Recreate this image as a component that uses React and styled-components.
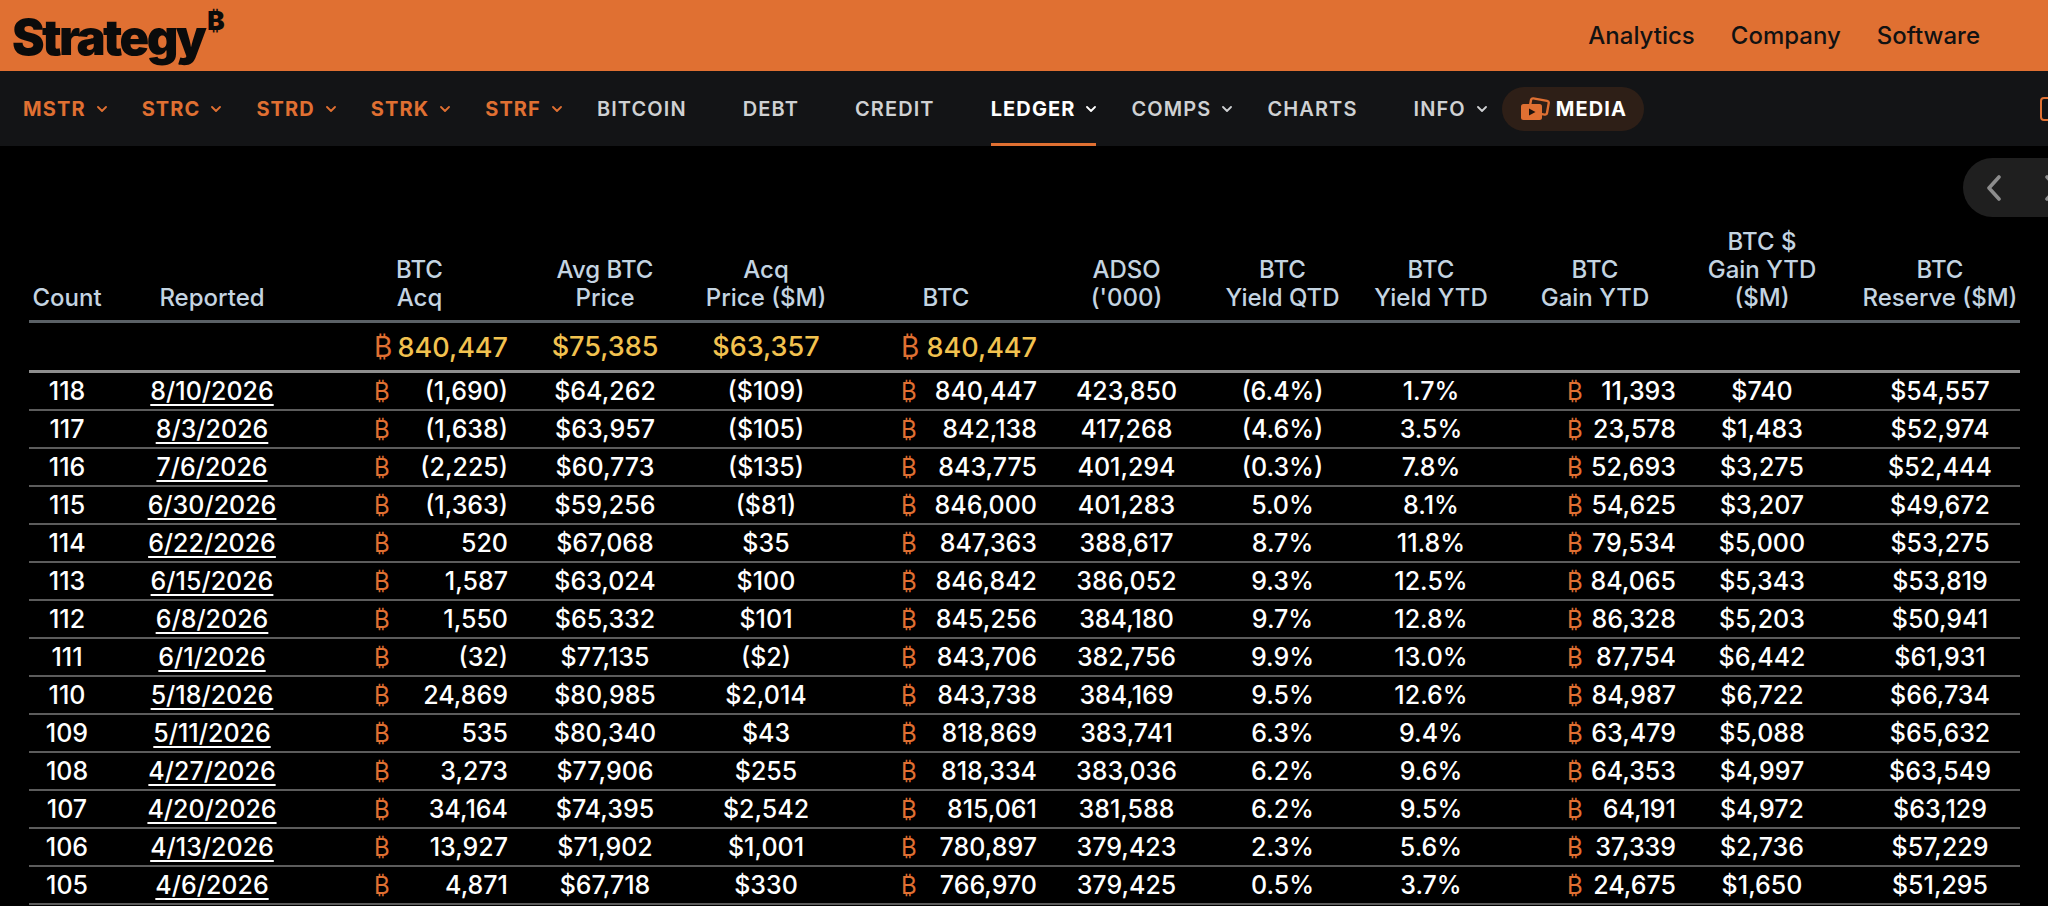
import React from "react";
import styled, { createGlobalStyle, css } from "styled-components";

const ORANGE = "#e07032";
const YELLOW = "#f2c24f";

const GlobalStyle = createGlobalStyle`
  html, body {
    margin: 0;
    padding: 0;
    background: #000;
    overflow: hidden;
  }
  body {
    font-family: Inter, "Noto Sans", "Liberation Sans", sans-serif;
    color: #fff;
  }
`;

const navItems = [
  { label: "MSTR", tone: "orange", menu: true },
  { label: "STRC", tone: "orange", menu: true },
  { label: "STRD", tone: "orange", menu: true },
  { label: "STRK", tone: "orange", menu: true },
  { label: "STRF", tone: "orange", menu: true },
  { label: "BITCOIN", tone: "plain" },
  { label: "DEBT", tone: "plain" },
  { label: "CREDIT", tone: "plain" },
  { label: "LEDGER", tone: "active", menu: true },
  { label: "COMPS", tone: "plain", menu: true },
  { label: "CHARTS", tone: "plain" },
  { label: "INFO", tone: "plain", menu: true },
];

// width / padding of each column, measured off the screenshot
const columns = [
  { head: ["Count"], w: 76 },
  { head: ["Reported"], w: 214 },
  { head: ["BTC", "Acq"], w: 201, btc: true, pl: 55, pr: 12 },
  { head: ["Avg BTC", "Price"], w: 170 },
  { head: ["Acq", "Price ($M)"], w: 152 },
  { head: ["BTC"], w: 208, btc: true, pl: 59, pr: 13 },
  { head: ["ADSO", "('000)"], w: 153 },
  { head: ["BTC", "Yield QTD"], w: 159 },
  { head: ["BTC", "Yield YTD"], w: 138 },
  { head: ["BTC", "Gain YTD"], w: 190, btc: true, pl: 67, pr: 14 },
  { head: ["BTC $", "Gain YTD", "($M)"], w: 144 },
  { head: ["BTC", "Reserve ($M)"], w: 186, pl: 26, headPl: 26 },
];

const totals = ["", "", "840,447", "$75,385", "$63,357", "840,447", "", "", "", "", "", ""];

const rows = [
  ["118", "8/10/2026", "(1,690)", "$64,262", "($109)", "840,447", "423,850", "(6.4%)", "1.7%", "11,393", "$740", "$54,557"],
  ["117", "8/3/2026", "(1,638)", "$63,957", "($105)", "842,138", "417,268", "(4.6%)", "3.5%", "23,578", "$1,483", "$52,974"],
  ["116", "7/6/2026", "(2,225)", "$60,773", "($135)", "843,775", "401,294", "(0.3%)", "7.8%", "52,693", "$3,275", "$52,444"],
  ["115", "6/30/2026", "(1,363)", "$59,256", "($81)", "846,000", "401,283", "5.0%", "8.1%", "54,625", "$3,207", "$49,672"],
  ["114", "6/22/2026", "520", "$67,068", "$35", "847,363", "388,617", "8.7%", "11.8%", "79,534", "$5,000", "$53,275"],
  ["113", "6/15/2026", "1,587", "$63,024", "$100", "846,842", "386,052", "9.3%", "12.5%", "84,065", "$5,343", "$53,819"],
  ["112", "6/8/2026", "1,550", "$65,332", "$101", "845,256", "384,180", "9.7%", "12.8%", "86,328", "$5,203", "$50,941"],
  ["111", "6/1/2026", "(32)", "$77,135", "($2)", "843,706", "382,756", "9.9%", "13.0%", "87,754", "$6,442", "$61,931"],
  ["110", "5/18/2026", "24,869", "$80,985", "$2,014", "843,738", "384,169", "9.5%", "12.6%", "84,987", "$6,722", "$66,734"],
  ["109", "5/11/2026", "535", "$80,340", "$43", "818,869", "383,741", "6.3%", "9.4%", "63,479", "$5,088", "$65,632"],
  ["108", "4/27/2026", "3,273", "$77,906", "$255", "818,334", "383,036", "6.2%", "9.6%", "64,353", "$4,997", "$63,549"],
  ["107", "4/20/2026", "34,164", "$74,395", "$2,542", "815,061", "381,588", "6.2%", "9.5%", "64,191", "$4,972", "$63,129"],
  ["106", "4/13/2026", "13,927", "$71,902", "$1,001", "780,897", "379,423", "2.3%", "5.6%", "37,339", "$2,736", "$57,229"],
  ["105", "4/6/2026", "4,871", "$67,718", "$330", "766,970", "379,425", "0.5%", "3.7%", "24,675", "$1,650", "$51,295"],
];

const Chevron = ({ color }) => (
  <svg width="10" height="6" viewBox="0 0 10 6">
    <polyline points="1,1 5,5 9,1" fill="none" stroke={color} strokeWidth="1.8" strokeLinecap="round" strokeLinejoin="round" />
  </svg>
);

const MediaIcon = () => (
  <svg width="31" height="24" viewBox="0 0 31 24">
    <rect x="10" y="2.5" width="18" height="14" rx="2" transform="rotate(10 19 9.5)" fill="none" stroke={ORANGE} strokeWidth="2.4" />
    <rect x="1" y="7" width="21" height="16" rx="2.5" fill={ORANGE} />
    <path d="M9 11.5 L15.5 15 L9 18.5Z" fill="#1b130e" />
  </svg>
);

const PagerChevron = ({ dir }) => (
  <svg width="16" height="26" viewBox="0 0 16 26">
    <polyline
      points={dir === "left" ? "13,2 3,13 13,24" : "3,2 13,13 3,24"}
      fill="none"
      stroke="#8d8d8d"
      strokeWidth="3.6"
      strokeLinecap="round"
      strokeLinejoin="round"
    />
  </svg>
);

export default function App() {
  return (
    <>
      <GlobalStyle />
      <Page>
        <TopBar>
          <Logo>
            Strategy<LogoMark>₿</LogoMark>
          </Logo>
          <TopLinks>
            <TopLink>Analytics</TopLink>
            <TopLink>Company</TopLink>
            <TopLink>Software</TopLink>
          </TopLinks>
        </TopBar>

        <NavBar>
          {navItems.map((item) => (
            <NavItem key={item.label} $tone={item.tone}>
              <span>{item.label}</span>
              <ChevronSlot $hidden={!item.menu}>
                <Chevron color={item.tone === "orange" ? ORANGE : item.tone === "active" ? "#fff" : "#cfd1d3"} />
              </ChevronSlot>
            </NavItem>
          ))}
          <MediaPill>
            <MediaIcon />
            <span>MEDIA</span>
          </MediaPill>
          <NavEdge />
        </NavBar>

        <PagerRow>
          <Pager>
            <PagerChevron dir="left" />
            <PagerChevron dir="right" />
          </Pager>
        </PagerRow>

        <TableWrap>
          <Table>
            <colgroup>
              {columns.map((c, i) => (
                <col key={i} style={{ width: c.w }} />
              ))}
            </colgroup>
            <thead>
              <tr>
                {columns.map((c, i) => (
                  <HeadCell key={i} $pl={c.headPl}>
                    {c.head.map((line, j) => (
                      <div key={j}>{line}</div>
                    ))}
                  </HeadCell>
                ))}
              </tr>
              <tr>
                {columns.map((c, i) => (
                  <TotalCell key={i} $pl={c.pl} $pr={c.pr}>
                    {totals[i] &&
                      (c.btc ? (
                        <BtcBox>
                          <BtcSign $big>₿</BtcSign>
                          <span>{totals[i]}</span>
                        </BtcBox>
                      ) : (
                        totals[i]
                      ))}
                  </TotalCell>
                ))}
              </tr>
            </thead>
            <tbody>
              {rows.map((row) => (
                <tr key={row[0]}>
                  {row.map((val, i) => {
                    const c = columns[i];
                    return (
                      <Cell key={i} $pl={c.pl} $pr={c.pr}>
                        {i === 1 ? (
                          <DateLink>{val}</DateLink>
                        ) : c.btc ? (
                          <BtcBox>
                            <BtcSign>₿</BtcSign>
                            <span>{val}</span>
                          </BtcBox>
                        ) : (
                          val
                        )}
                      </Cell>
                    );
                  })}
                </tr>
              ))}
            </tbody>
          </Table>
        </TableWrap>
      </Page>
    </>
  );
}

const Page = styled.div`
  width: 2048px;
  height: 906px;
  overflow: hidden;
  background: #000;
`;

const TopBar = styled.header`
  height: 71px;
  background: ${ORANGE};
  display: flex;
  align-items: center;
  justify-content: space-between;
  padding: 0 68px 0 12px;
`;

const Logo = styled.div`
  display: flex;
  align-items: flex-start;
  font-family: Inter, "Liberation Sans", sans-serif;
  font-size: 49px;
  font-weight: 900;
  letter-spacing: -2.6px;
  color: #0b0b0b;
  line-height: 1;
  padding-top: 4px;
`;

const LogoMark = styled.span`
  font-size: 26px;
  font-weight: 900;
  letter-spacing: 0;
  margin-left: 3px;
  margin-top: -5px;
`;

const TopLinks = styled.nav`
  display: flex;
  gap: 36px;
`;

const TopLink = styled.a`
  font-size: 24px;
  font-weight: 500;
  color: #121212;
  cursor: pointer;
`;

const toneStyles = {
  orange: css`
    color: ${ORANGE};
    font-weight: 700;
  `,
  plain: css`
    color: #cfd1d3;
    font-weight: 600;
  `,
  active: css`
    color: #ffffff;
    font-weight: 700;
    border-bottom-color: ${ORANGE};
  `,
};

const NavBar = styled.nav`
  height: 75px;
  background: #131416;
  display: flex;
  align-items: stretch;
  padding-left: 23px;
  gap: 35px;
  overflow: hidden;
`;

const NavItem = styled.div`
  display: flex;
  align-items: center;
  gap: 11px;
  font-size: 20px;
  letter-spacing: 1.1px;
  border-top: 3px solid transparent;
  border-bottom: 3px solid transparent;
  cursor: pointer;
  ${({ $tone }) => toneStyles[$tone]}
`;

const ChevronSlot = styled.span`
  display: flex;
  width: 10px;
  visibility: ${({ $hidden }) => ($hidden ? "hidden" : "visible")};
`;

const MediaPill = styled.div`
  align-self: center;
  margin-left: -20px;
  height: 44px;
  display: flex;
  align-items: center;
  gap: 5px;
  padding: 0 17px 0 18px;
  border-radius: 22px;
  background: #2e1f17;
  color: #fff;
  font-size: 20px;
  font-weight: 700;
  letter-spacing: 1.1px;
`;

const NavEdge = styled.div`
  align-self: center;
  margin-left: auto;
  margin-right: -26px;
  width: 30px;
  height: 20px;
  border: 2px solid ${ORANGE};
  border-radius: 4px;
  flex-shrink: 0;
`;

const PagerRow = styled.div`
  display: flex;
  justify-content: flex-end;
  margin-top: 12px;
  height: 59px;
`;

const Pager = styled.div`
  display: flex;
  align-items: center;
  gap: 42px;
  width: 112px;
  flex-shrink: 0;
  margin-right: -27px;
  padding-left: 23px;
  box-sizing: border-box;
  border-radius: 30px;
  background: #1f1f1f;
`;

const TableWrap = styled.div`
  padding-left: 29px;
`;

const Table = styled.table`
  border-collapse: separate;
  border-spacing: 0;
  table-layout: fixed;
  width: 1991px;
  font-size: 25px;
  font-weight: 500;
`;

const HeadCell = styled.th`
  height: 95px;
  padding: 0 0 8px ${({ $pl }) => $pl || 0}px;
  vertical-align: bottom;
  text-align: center;
  font-size: 24px;
  font-weight: 500;
  line-height: 28px;
  color: #c4d4e1;
  border-bottom: 3px solid #5b6166;
  white-space: nowrap;
`;

const TotalCell = styled.td`
  height: 47px;
  padding: 0 ${({ $pr }) => $pr || 0}px 0 ${({ $pl }) => $pl || 0}px;
  text-align: center;
  font-size: 27px;
  color: ${YELLOW};
  border-bottom: 3px solid #8e8e8e;
  white-space: nowrap;
`;

const Cell = styled.td`
  height: 36px;
  padding: 0 ${({ $pr }) => $pr || 0}px 0 ${({ $pl }) => $pl || 0}px;
  text-align: center;
  line-height: 1;
  color: #fff;
  border-bottom: 2px solid #5c5c5c;
  white-space: nowrap;
`;

const BtcBox = styled.div`
  display: flex;
  justify-content: space-between;
  align-items: baseline;
`;

const BtcSign = styled.span`
  color: ${ORANGE};
  font-weight: 400;
  font-size: ${({ $big }) => ($big ? "28px" : "24px")};
`;

const DateLink = styled.a`
  color: #fff;
  text-decoration: underline;
  text-decoration-thickness: 2px;
  text-underline-offset: 4px;
  cursor: pointer;
`;
